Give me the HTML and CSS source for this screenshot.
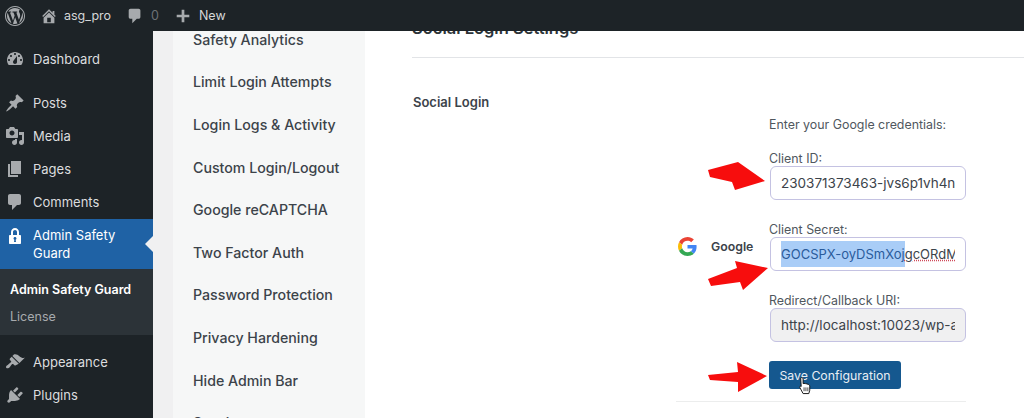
FILE: index.html
```html
<!DOCTYPE html>
<html lang="en">
<head>
  <meta charset="UTF-8" />
  <title>Admin Safety Guard - Social Login</title>
  <link rel="stylesheet" href="styles.css">
</head>
<body>
  <header class="adminbar">
    <svg class="bar-logo" viewBox="0 0 20 20"><path d="M20 10c0-5.52-4.48-10-10-10S0 4.48 0 10s4.48 10 10 10 10-4.48 10-10zM10 1.01c4.97 0 8.99 4.02 8.99 8.99s-4.02 8.99-8.99 8.99S1.01 14.97 1.01 10 5.03 1.01 10 1.01zM8.01 14.82L4.96 6.61c.49-.03 1.05-.08 1.05-.08.43-.05.38-1.01-.06-.99 0 0-1.29.1-2.13.1-.15 0-.33 0-.52-.01 1.44-2.17 3.9-3.6 6.7-3.6 2.09 0 3.99.79 5.41 2.09-.6-.1-1.45.35-1.45 1.45 0 .6.34 1.1.71 1.7.29.51.46 1.16.46 2.13 0 1.3-1.22 4.35-1.22 4.35l-2.61-7.17c.46-.02.72-.16.72-.16.43-.05.38-1.1-.06-1.02 0 0-1.3.13-2.14.13-.79 0-2.11-.15-2.11-.15-.43-.02-.48 1.06-.05 1.08l.84.08 1.12 3.04zm6.02 2.15L16.64 10s.67-1.69.39-3.81c.63 1.14.94 2.42.94 3.81 0 2.96-1.56 5.58-3.94 6.97zM2.68 6.77L6.5 17.25c-2.67-1.3-4.47-4.08-4.47-7.25 0-1.16.2-2.23.65-3.23zm7.45 4.53l2.29 6.25c-.75.27-1.57.42-2.42.42-.72 0-1.41-.11-2.06-.3z"/></svg>
    <svg class="bar-icon home-icon" viewBox="0 0 20 20"><path d="M16 8.5l1.53 1.53-1.06 1.06L10 4.62l-6.47 6.47-1.06-1.06L10 2.5l4 4v-2h2v4zm-6-2.46l6 5.99V18H4v-5.97zM12 17v-5H8v5h4z"/></svg>
    <span class="bar-site">asg_pro</span>
    <svg class="bar-icon comment-icon" viewBox="0 0 20 20"><path d="M5 2h9c1.1 0 2 .9 2 2v7c0 1.1-.9 2-2 2h-2l-5 5v-5H5c-1.1 0-2-.9-2-2V4c0-1.1.9-2 2-2z"/></svg>
    <span class="bar-count">0</span>
    <svg class="bar-icon plus-icon" viewBox="0 0 20 20"><path d="M8.5 3h3v5.5H17v3h-5.500V17h-3v-5.500H3v-3h5.500z"/></svg>
    <span class="bar-new">New</span>
  </header>

  <div class="wrap">
    <nav class="sidebar">
      <a class="menu-item">
        <svg viewBox="0 0 20 20"><path d="M3.76 16h12.48c1.1-1.37 1.76-3.11 1.76-5 0-4.42-3.58-8-8-8s-8 3.58-8 8c0 1.89.66 3.63 1.76 5zM10 4c.55 0 1 .45 1 1s-.45 1-1 1-1-.45-1-1 .45-1 1-1zM6 6c.55 0 1 .45 1 1s-.45 1-1 1-1-.45-1-1 .45-1 1-1zm8 0c.55 0 1 .45 1 1s-.45 1-1 1-1-.45-1-1 .45-1 1-1zm-5.370 5.550L12 7v6c0 1.100-.9 2-2 2s-2-.9-2-2c0-.57.24-1.080.63-1.450zM4 10c.55 0 1 .45 1 1s-.45 1-1 1-1-.45-1-1 .45-1 1-1zm12 0c.55 0 1 .45 1 1s-.45 1-1 1-1-.45-1-1 .45-1 1-1z"/></svg>
        Dashboard
      </a>
      <div class="menu-sep"></div>
      <a class="menu-item">
        <svg viewBox="0 0 20 20"><path d="M10.44 3.020l1.820-1.820 6.360 6.350-1.830 1.820c-1.050-.68-2.480-.57-3.410.36l-.75.75c-.92.93-1.040 2.350-.35 3.410l-1.830 1.820-2.410-2.410-2.800 2.790c-.42.42-3.380 2.710-3.800 2.290s1.860-3.390 2.280-3.810l2.790-2.790L4.100 9.360l1.830-1.820c1.050.69 2.480.57 3.400-.36l.75-.75c.93-.92 1.050-2.350.36-3.410z"/></svg>
        Posts
      </a>
      <a class="menu-item">
        <svg viewBox="0 0 20 20"><path d="M13 11V4c0-.55-.45-1-1-1h-1.670L9 1H5L3.670 3H2c-.55 0-1 .45-1 1v7c0 .55.45 1 1 1h10c.55 0 1-.45 1-1zM7 4.500c1.380 0 2.500 1.120 2.500 2.500S8.380 9.500 7 9.500 4.500 8.380 4.500 7 5.620 4.500 7 4.500zM14 6h5v10.500c0 1.380-1.120 2.500-2.500 2.500S14 17.880 14 16.500s1.120-2.500 2.500-2.500c.17 0 .34.02.5.05V9h-3V6zm-4 8.050V13h2v3.500c0 1.380-1.120 2.500-2.500 2.500S7 17.880 7 16.500 8.120 14 9.500 14c.17 0 .34.02.5.05z"/></svg>
        Media
      </a>
      <a class="menu-item">
        <svg viewBox="0 0 20 20"><path d="M6 15V2h10v13H6zm-1 1h8v2H3V5h2v11z"/></svg>
        Pages
      </a>
      <a class="menu-item">
        <svg viewBox="0 0 20 20"><path d="M5 2h9c1.100 0 2 .9 2 2v7c0 1.100-.9 2-2 2h-2l-5 5v-5H5c-1.100 0-2-.9-2-2V4c0-1.100.9-2 2-2z"/></svg>
        Comments
      </a>
      <a class="menu-item menu-current">
        <svg viewBox="0 0 20 20"><path d="M14 9h1c.55 0 1 .45 1 1v7c0 .55-.45 1-1 1H5c-.55 0-1-.45-1-1v-7c0-.55.45-1 1-1h1V6c0-2.210 1.790-4 4-4s4 1.790 4 4v3zm-2 0V6c0-1.100-.9-2-2-2s-2 .9-2 2v3h4zm-1 7l-.36-2.150c.51-.24.86-.75.86-1.350 0-.83-.67-1.500-1.500-1.500s-1.500.67-1.500 1.500c0 .6.35 1.110.86 1.350L9 16h2z" fill-rule="evenodd"/></svg>
        <span>Admin Safety Guard</span>
      </a>
      <div class="submenu">
        <a class="sub-current">Admin Safety Guard</a>
        <a>License</a>
      </div>
      <a class="menu-item">
        <svg viewBox="0 0 20 20"><path d="M14.480 11.060L7.410 3.990l1.500-1.500c.5-.56 2.300-.47 3.510.32 1.210.8 1.430 1.280 2.910 2.100 1.180.64 2.450 1.260 4.450.85zm-.71.71L6.700 4.700 4.930 6.470c-.39.39-.39 1.020 0 1.410l1.060 1.060c.39.39.39 1.030 0 1.420-.6.6-1.430 1.110-2.210 1.690-.35.26-.7.53-1.010.84C1.430 13.230.4 14.930 1.400 15.900c.99 1 2.680-.03 3.020-.44.3-.3.58-.65.84-1 .58-.78 1.090-1.610 1.690-2.210.39-.39 1.020-.39 1.410 0l1.060 1.060c.39.39 1.020.39 1.410 0z"/></svg>
        Appearance
      </a>
      <a class="menu-item">
        <svg viewBox="0 0 20 20"><path d="M13.110 4.360L9.870 7.600 8 5.730l3.240-3.240c.35-.34 1.050-.2 1.560.32.52.51.66 1.210.31 1.550zm-8 1.770l.91-1.120 9.010 9.010-1.190.84c-.71.71-2.630 1.160-3.820 1.160H6.140L4.900 17.260c-.59.59-1.540.59-2.120 0-.59-.58-.59-1.530 0-2.120l1.240-1.240v-3.880c0-1.130.4-3.190 1.090-3.890zm7.260 3.970l3.240-3.240c.34-.35 1.040-.21 1.550.31.52.51.66 1.210.31 1.550l-3.240 3.250z"/></svg>
        Plugins
      </a>
    </nav>

    <div class="gutter"></div>

    <ul class="tabs">
      <li>Safety Analytics</li>
      <li>Limit Login Attempts</li>
      <li>Login Logs &amp; Activity</li>
      <li>Custom Login/Logout</li>
      <li>Google reCAPTCHA</li>
      <li>Two Factor Auth</li>
      <li>Password Protection</li>
      <li>Privacy Hardening</li>
      <li>Hide Admin Bar</li>
      <li>Sessions</li>
    </ul>

    <main class="content">
      <h2 class="page-title">Social Login Settings</h2>
      <h3 class="section-title">Social Login</h3>
      <div class="provider-row">
        <div class="provider">
          <svg class="google-logo" viewBox="0 0 48 48">
            <path fill="#EA4335" d="M24 9.500c3.540 0 6.710 1.220 9.210 3.600l6.850-6.850C35.900 2.380 30.470 0 24 0 14.620 0 6.510 5.380 2.560 13.220l7.980 6.190C12.430 13.720 17.740 9.500 24 9.500z"/>
            <path fill="#4285F4" d="M46.980 24.550c0-1.570-.15-3.090-.38-4.550H24v9.020h12.940c-.58 2.960-2.260 5.480-4.780 7.180l7.730 6c4.510-4.180 7.090-10.360 7.090-17.650z"/>
            <path fill="#FBBC05" d="M10.530 28.590c-.48-1.450-.76-2.990-.76-4.590s.27-3.140.76-4.590l-7.980-6.190C.92 16.460 0 20.120 0 24c0 3.880.92 7.540 2.560 10.780l7.970-6.190z"/>
            <path fill="#34A853" d="M24 48c6.480 0 11.930-2.130 15.890-5.810l-7.730-6c-2.150 1.450-4.920 2.300-8.160 2.300-6.260 0-11.570-4.220-13.470-9.910l-7.980 6.190C6.510 42.620 14.620 48 24 48z"/>
          </svg>
          <span>Google</span>
        </div>
        <div class="fields">
          <p class="intro">Enter your Google credentials:</p>
          <label class="field-label">Client ID:</label>
          <div class="field"><span class="field-text">230371373463-jvs6p1vh4nmqe8</span></div>
          <label class="field-label">Client Secret:</label>
          <div class="field"><span class="field-text spell"><span class="selected">GOCSPX-oyDSmXoj</span>gcORdMvxTq</span></div>
          <label class="field-label">Redirect/Callback URI:</label>
          <div class="field field-readonly"><span class="field-text">http://localhost:10023/wp-admin</span></div>
          <button class="save-btn">Save Configuration</button>
        </div>
      </div>
      <hr class="row-line">
    </main>
  </div>

  <svg class="overlay arrow-one" viewBox="0 0 1024 418"><path d="M708 170L738 162L765 181L735 190L732 182L710 177Z"/></svg>
  <svg class="overlay arrow-two" viewBox="0 0 1024 418"><path d="M708 279L737 268L735 261L768 268L743 290L740 282L711 286Z"/></svg>
  <svg class="overlay arrow-three" viewBox="0 0 1024 418"><path d="M708 375L738 372L737 362L767 376L738 392L738 382L710 380Z"/></svg>
  <svg class="cursor" viewBox="0 0 14 20"><path d="M3.500 1.500c1 0 1.500.7 1.500 1.500v5l1-.2 1.500.2 1.500.3 2 .7c.8.4 1 1 1 1.700V15l-1 3.500H5L1.500 12c-.4-.8.4-1.700 1.500-1L2.500 3c0-.8.200-1.500 1-1.500z" fill="#fff" stroke="#111" stroke-width="1"/><path d="M6 12v4M8 12v4M10 12v4" stroke="#111" stroke-width=".8"/></svg>
</body>
</html>
```

FILE: styles.css
```css
* {
  box-sizing: border-box;
}

html, body {
  margin: 0;
  height: 418px;
  overflow: hidden;
}

body {
  font-family: Inter, "Liberation Sans", sans-serif;
  background: #fff;
  position: relative;
}

/* top bar */
.adminbar {
  position: relative;
  z-index: 2;
  height: 31px;
  background: #1d2327;
  color: #d5d7d8;
  display: flex;
  align-items: center;
  font-size: 12.500px;
}

.adminbar svg {
  fill: #a7aaad;
  flex: none;
}

.bar-logo {
  width: 20px;
  height: 20px;
  margin-left: 5px;
}

.bar-icon {
  width: 18px;
  height: 18px;
}

.home-icon {
  margin-left: 15px;
}

.bar-site {
  margin-left: 6px;
}

.comment-icon {
  margin-left: 15px;
}

.bar-count {
  margin-left: 7px;
  color: #6d7175;
}

.plus-icon {
  margin-left: 15px;
}

.bar-new {
  margin-left: 7px;
}

.wrap {
  display: flex;
  height: 387px;
  overflow: hidden;
}

/* left menu */
.sidebar {
  width: 153px;
  flex: none;
  background: #1d2327;
  padding-top: 11px;
  color: #dcdddf;
  font-size: 13px;
}

.sidebar a {
  display: block;
}

.sidebar .menu-item {
  display: flex;
  align-items: center;
  gap: 8px;
  height: 33px;
  padding-left: 5px;
}

.menu-item svg {
  width: 20px;
  height: 20px;
  fill: #a7aaad;
  flex: none;
}

.menu-sep {
  height: 11px;
}

.sidebar .menu-current {
  position: relative;
  height: 50px;
  margin-top: 1px;
  background: #1f62a5;
  color: #fff;
  line-height: 18px;
}

.menu-current svg {
  fill: #fff;
  margin-bottom: 16px;
}

.menu-current::after {
  content: "";
  position: absolute;
  right: 0;
  top: 17px;
  border: 8px solid transparent;
  border-left-width: 0;
  border-right-color: #f0f0f1;
}

.submenu {
  height: 66px;
  margin-bottom: 10px;
  padding: 7px 10px 0;
  background: #2c3338;
  color: #a7aaad;
  font-size: 12.500px;
}

.submenu a {
  line-height: 27px;
}

.submenu .sub-current {
  color: #fff;
  font-weight: 600;
}

.gutter {
  width: 20px;
  flex: none;
  background: #f0f0f1;
}

/* tabs column */
.tabs {
  width: 192px;
  flex: none;
  list-style: none;
  margin: -0.2px 0 0;
  padding: 0 0 0 20px;
  background: #f6f7f7;
  color: #3c434a;
  font-size: 14.200px;
  font-weight: 500;
}

.tabs li {
  height: 42.600px;
  line-height: 18px;
}

/* main panel */
.content {
  flex: 1;
  min-width: 0;
  background: #fff;
  color: #3c434a;
}

.page-title {
  margin: -15px 0 0 47px;
  padding-bottom: 17px;
  border-bottom: 1px solid #e2e4e7;
  font-size: 16.500px;
  line-height: 24px;
  font-weight: 600;
  color: #2c3338;
}

.section-title {
  margin: 34px 0 4px 48px;
  font-size: 13px;
  line-height: 20px;
  font-weight: 600;
  color: #3c434a;
}

.provider-row {
  display: flex;
  margin-left: 311px;
}

.provider {
  width: 93px;
  flex: none;
  align-self: center;
  margin-bottom: 12px;
  padding-left: 2px;
  display: flex;
  align-items: center;
  gap: 14px;
  font-size: 12.300px;
  font-weight: 600;
  color: #3c434a;
}

.google-logo {
  width: 19px;
  height: 19px;
  flex: none;
}

.fields {
  width: 197px;
  display: flex;
  flex-direction: column;
  align-items: flex-start;
  font-size: 12.400px;
  color: #50575e;
}

.intro {
  margin: 0 0 16px;
  line-height: 18px;
}

.field-label {
  line-height: 18px;
  margin-bottom: -2px;
}

.field {
  width: 196px;
  height: 34px;
  margin: 0 0 21px 1px;
  padding: 0 10px;
  display: flex;
  align-items: center;
  background: #fff;
  border: 1px solid #c4c2e2;
  border-radius: 6px;
  color: #3c434a;
  font-size: 13.500px;
}

.field-text {
  display: block;
  width: 100%;
  overflow: hidden;
  white-space: nowrap;
}

.spell {
  font-size: 13px;
  text-decoration: underline dotted #d04a5a;
}

.selected {
  display: inline-block;
  line-height: 26px;
  background: #a9cdf7;
  color: #2a5c9c;
}

.field-readonly {
  background: #f0f0f1;
  margin-bottom: 19px;
}

.save-btn {
  width: 132px;
  height: 28px;
  padding: 0;
  background: #15588f;
  border: 0;
  border-radius: 3px;
  color: #e8eef4;
  font-family: inherit;
  font-size: 12.300px;
}

.row-line {
  width: 290px;
  margin: 12px 0 0 311px;
  border: 0;
  border-top: 1px solid #eceded;
}

/* annotations drawn on top of the recording */
.overlay {
  position: absolute;
  left: 0;
  top: 0;
  width: 1024px;
  height: 418px;
  fill: #f70d0d;
  pointer-events: none;
  z-index: 3;
}

.cursor {
  position: absolute;
  left: 798px;
  top: 376px;
  width: 14px;
  height: 19px;
  z-index: 4;
}
```
